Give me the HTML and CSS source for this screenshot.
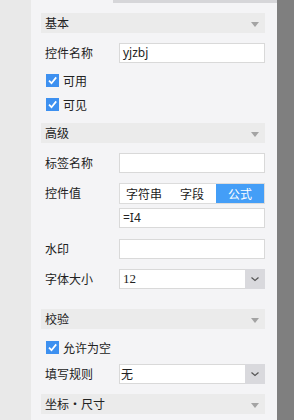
FILE: index.html
```html
<!DOCTYPE html>
<html>
<head>
<meta charset="utf-8">
<link rel="stylesheet" href="styles.css">
</head>
<body>
<div class="page">
  <div class="side-left"></div>
  <div class="panel">
    <div class="topbar"><div class="tab-active"></div><div class="tab-rest"></div></div>

    <div class="section-header mt10"><span>基本</span><i class="tri"></i></div>
    <div class="field mt10"><label>控件名称</label><div class="input">yjzbj</div></div>
    <div class="check mt11"><span class="box"><svg viewBox="0 0 13 13" width="13" height="13"><path d="M3 6.6 L5.5 9.2 L10.2 3.4" fill="none" stroke="#fff" stroke-width="1.7"/></svg></span><span>可用</span></div>
    <div class="check mt11"><span class="box"><svg viewBox="0 0 13 13" width="13" height="13"><path d="M3 6.6 L5.5 9.2 L10.2 3.4" fill="none" stroke="#fff" stroke-width="1.7"/></svg></span><span>可见</span></div>

    <div class="section-header mt12"><span>高级</span><i class="tri"></i></div>
    <div class="field mt10"><label>标签名称</label><div class="input"></div></div>
    <div class="field-top mt10">
      <label>控件值</label>
      <div class="stack">
        <div class="seg"><span>字符串</span><span>字段</span><span class="on">公式</span></div>
        <div class="input">=I4</div>
      </div>
    </div>
    <div class="field mt11"><label>水印</label><div class="input"></div></div>
    <div class="field mt10"><label>字体大小</label><div class="select"><span class="val serif">12</span><span class="btn"><svg viewBox="0 0 20 20" width="20" height="20"><path d="M6.5 8.5 L10 11.5 L13.5 8.5" fill="none" stroke="#555" stroke-width="1.2"/></svg></span></div></div>

    <div class="section-header mt20"><span>校验</span><i class="tri"></i></div>
    <div class="check mt12"><span class="box"><svg viewBox="0 0 13 13" width="13" height="13"><path d="M3 6.6 L5.5 9.2 L10.2 3.4" fill="none" stroke="#fff" stroke-width="1.7"/></svg></span><span>允许为空</span></div>
    <div class="field mt10"><label>填写规则</label><div class="select"><span class="val tight">无</span><span class="btn"><svg viewBox="0 0 20 20" width="20" height="20"><path d="M6.5 8.5 L10 11.5 L13.5 8.5" fill="none" stroke="#555" stroke-width="1.2"/></svg></span></div></div>

    <div class="section-header mt10"><span>坐标・尺寸</span><i class="tri"></i></div>
  </div>
  <div class="side-right"></div>
</div>
</body>
</html>
```
FILE: styles.css
```css
html, body {
  margin: 0;
  padding: 0;
  width: 294px;
  height: 420px;
  overflow: hidden;
}
body {
  font-family: "Noto Sans CJK SC", "Noto Sans", sans-serif;
  font-size: 12px;
  color: #222;
}
.page {
  display: flex;
  height: 420px;
}
.side-left {
  width: 31px;
  flex: none;
  background: #e9e9e9;
}
.side-right {
  width: 17px;
  flex: none;
  background: #7f7f7f;
}
.panel {
  width: 246px;
  flex: none;
  background: #f4f4f6;
  display: flex;
  flex-direction: column;
  padding: 0 12px 0 10px;
  box-sizing: border-box;
  overflow: hidden;
}
.topbar {
  display: flex;
  height: 3px;
  margin: 0 -12px 0 -10px;
  flex: none;
}
.tab-active { width: 82px; background: #f4f4f6; }
.tab-rest { flex: 1; background: #d6d6d9; }

.mt10 { margin-top: 10px; }
.mt11 { margin-top: 11px; }
.mt12 { margin-top: 12px; }
.mt20 { margin-top: 20px; }

.section-header {
  flex: none;
  height: 20px;
  background: #ebebeb;
  display: flex;
  align-items: center;
  justify-content: space-between;
  padding: 0 6px 0 4px;
  line-height: 20px;
}
.tri {
  width: 0;
  height: 0;
  border-left: 4px solid transparent;
  border-right: 4px solid transparent;
  border-top: 5px solid #a3a3a3;
  margin-top: 2px;
}
.field {
  flex: none;
  display: flex;
  align-items: center;
  height: 20px;
}
.field label, .field-top label {
  width: 78px;
  padding-left: 4px;
  box-sizing: border-box;
  flex: none;
  line-height: 20px;
}
.field-top {
  flex: none;
  display: flex;
  align-items: flex-start;
}
.field-top label { margin-top: 0; }
.stack {
  flex: 1;
  display: flex;
  flex-direction: column;
  gap: 4px;
}
.input {
  flex: 1;
  height: 20px;
  box-sizing: border-box;
  border: 1px solid #d9d9d9;
  background: #fff;
  padding-left: 3px;
  line-height: 17px;
  font-family: "Noto Sans", "Noto Sans CJK SC", sans-serif;
  font-size: 12px;
  color: #222;
}
.stack .input { flex: none; }
.seg {
  display: flex;
  height: 21px;
  border: 1px solid #dcdcdc;
  background: #fff;
  box-sizing: border-box;
}
.seg span {
  flex: 1;
  text-align: center;
  line-height: 19px;
  font-size: 12px;
}
.seg span.on {
  background: #449ef7;
  color: #fff;
}
.select {
  flex: 1;
  height: 20px;
  display: flex;
  border: 1px solid #d9d9d9;
  border-right: none;
  box-sizing: border-box;
  background: #fff;
}
.select .val {
  flex: 1;
  padding-left: 3px;
  line-height: 18px;
}
.select .val.tight { padding-left: 1px; }
.serif {
  font-family: "Liberation Serif", serif;
  font-size: 13px;
}
.select .btn {
  width: 20px;
  height: 20px;
  margin-top: -1px;
  background: #d9d9dd;
  display: flex;
  align-items: center;
  justify-content: center;
}
.check {
  flex: none;
  display: flex;
  align-items: center;
  height: 13px;
  padding-left: 5px;
  gap: 4px;
  line-height: 13px;
}
.box {
  width: 13px;
  height: 13px;
  background: #3d90f0;
  display: block;
  flex: none;
}
.box svg { display: block; }
```
